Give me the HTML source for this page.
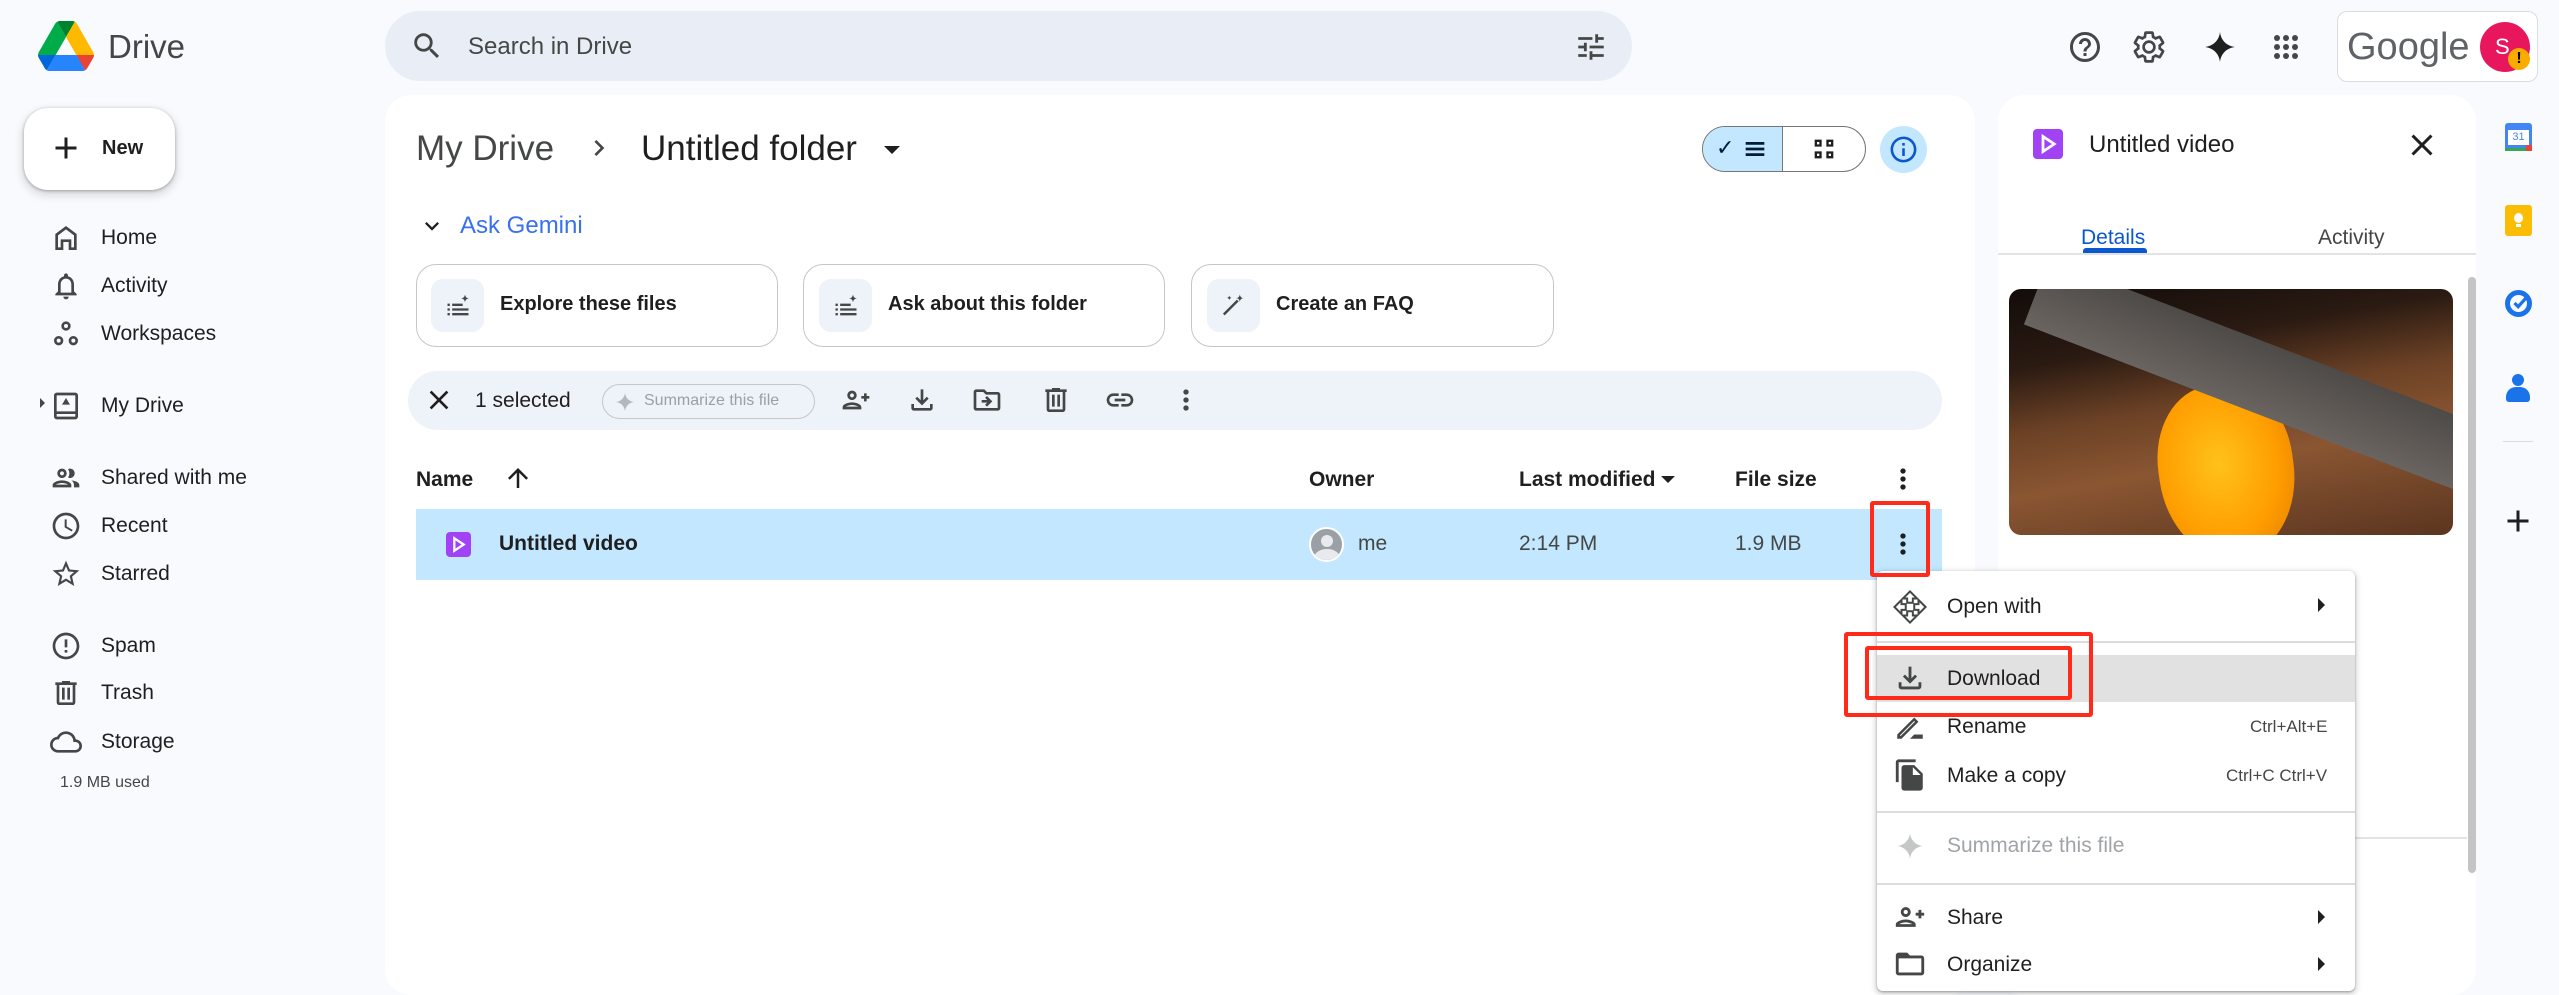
<!DOCTYPE html>
<html><head><meta charset="utf-8"><style>
*{box-sizing:border-box;margin:0;padding:0}
body{width:2559px;height:978px;overflow:hidden;background:#f8fafd;font-family:"Liberation Sans",Arial,sans-serif;color:#1f1f1f;position:relative}
.a{position:absolute}
.t{position:absolute;white-space:nowrap;line-height:1}
svg{position:absolute;fill:#444746}
.nav{font-size:21px}
.ic{width:32px;height:32px}
</style></head><body>
<!-- logo -->
<svg class="a" style="left:38px;top:21px" width="56" height="50" viewBox="0 0 87.3 78"><path d="m6.6 66.85 3.850 6.65c.8 1.4 1.95 2.5 3.3 3.3l13.75-23.8h-27.5c0 1.55.4 3.1 1.2 4.5z" fill="#0066da"/><path d="m43.65 25-13.75-23.8c-1.35.8-2.5 1.9-3.3 3.3l-25.4 44a9.06 9.06 0 0 0 -1.2 4.5h27.5z" fill="#00ac47"/><path d="m73.55 76.8c1.35-.8 2.5-1.9 3.3-3.3l1.6-2.75 7.650-13.25c.8-1.4 1.2-2.95 1.2-4.5h-27.502l5.852 11.5z" fill="#ea4335"/><path d="m43.65 25 13.75-23.8c-1.35-.8-2.9-1.2-4.5-1.2h-18.5c-1.6 0-3.15.45-4.5 1.2z" fill="#00832d"/><path d="m59.8 53h-32.3l-13.75 23.8c1.35.8 2.9 1.2 4.5 1.2h50.8c1.6 0 3.15-.45 4.5-1.2z" fill="#2684fc"/><path d="m73.4 26.5-12.7-22c-.8-1.4-1.950-2.5-3.3-3.3l-13.750 23.8 16.15 28h27.45c0-1.55-.4-3.1-1.2-4.5z" fill="#ffba00"/></svg>
<div class="t" style="left:108px;top:30px;font-size:33px;color:#444746">Drive</div>
<!-- search -->
<div class="a" style="left:385px;top:11px;width:1247px;height:70px;border-radius:35px;background:#e9eef6"></div>
<svg style="left:410px;top:29px" width="34" height="34" viewBox="0 0 24 24"><path d="M15.5 14h-.79l-.28-.27A6.47 6.47 0 0 0 16 9.5 6.5 6.5 0 1 0 9.5 16c1.61 0 3.090-.59 4.230-1.57l.27.28v.79l5 4.99L20.49 19l-4.99-5zm-6 0C7.01 14 5 11.99 5 9.5S7.01 5 9.5 5 14 7.01 14 9.5 11.99 14 9.5 14z"/></svg>
<div class="t" style="left:468px;top:35px;font-size:24px;color:#444746">Search in Drive</div>
<svg style="left:1574px;top:30px" width="34" height="34" viewBox="0 0 24 24"><path d="M3 17v2h6v-2H3zM3 5v2h10V5H3zm10 16v-2h8v-2h-8v-2h-2v6h2zM7 9v2H3v2h4v2h2V9H7zm14 4v-2H11v2h10zm-6-4h2V7h4V5h-4V3h-2v6z"/></svg>
<!-- top right -->
<svg style="left:2067px;top:29px" width="36" height="36" viewBox="0 0 24 24"><path d="M11 18h2v-2h-2v2zm1-16C6.48 2 2 6.48 2 12s4.48 10 10 10 10-4.48 10-10S17.52 2 12 2zm0 18c-4.41 0-8-3.59-8-8s3.59-8 8-8 8 3.59 8 8-3.59 8-8 8zm0-14c-2.21 0-4 1.79-4 4h2c0-1.1.9-2 2-2s2 .9 2 2c0 2-3 1.75-3 5h2c0-2.25 3-2.5 3-5 0-2.21-1.79-4-4-4z"/></svg>
<svg style="left:2131px;top:29px" width="36" height="36" viewBox="0 0 24 24"><path d="M19.14 12.94c.04-.3.06-.61.06-.94 0-.32-.02-.64-.07-.94l2.030-1.58a.49.49 0 0 0 .12-.61l-1.92-3.32a.488.488 0 0 0-.59-.22l-2.39.96c-.5-.38-1.03-.7-1.62-.94l-.36-2.54a.484.484 0 0 0-.48-.41h-3.84c-.24 0-.43.17-.47.41l-.36 2.54c-.59.24-1.13.57-1.62.94l-2.39-.96c-.22-.08-.47 0-.59.22L2.74 8.87c-.12.21-.08.47.12.61l2.03 1.58c-.05.3-.09.63-.09.94s.02.64.07.94l-2.03 1.58a.49.49 0 0 0-.12.61l1.92 3.32c.12.22.37.29.59.22l2.39-.96c.5.38 1.03.7 1.62.94l.36 2.54c.05.24.24.41.48.41h3.84c.24 0 .44-.17.47-.41l.36-2.54c.59-.24 1.13-.56 1.62-.94l2.39.96c.22.08.47 0 .59-.22l1.92-3.32c.12-.22.07-.47-.12-.61l-2.01-1.58zM12 15.6c-1.98 0-3.6-1.62-3.6-3.6s1.62-3.6 3.6-3.6 3.6 1.62 3.6 3.6-1.62 3.6-3.6 3.6z" fill="none" stroke="#444746" stroke-width="1.8"/></svg>
<svg style="left:2202px;top:29px" width="36" height="36" viewBox="0 0 24 24"><path d="M12 2C12.6 7.5 16.5 11.4 22 12 16.5 12.6 12.6 16.5 12 22 11.4 16.5 7.5 12.6 2 12 7.5 11.4 11.4 7.5 12 2z" fill="#1f1f1f"/></svg>
<svg style="left:2268px;top:29px" width="36" height="36" viewBox="0 0 24 24"><g fill="#444746"><circle cx="6" cy="6" r="2"/><circle cx="12" cy="6" r="2"/><circle cx="18" cy="6" r="2"/><circle cx="6" cy="12" r="2"/><circle cx="12" cy="12" r="2"/><circle cx="18" cy="12" r="2"/><circle cx="6" cy="18" r="2"/><circle cx="12" cy="18" r="2"/><circle cx="18" cy="18" r="2"/></g></svg>
<div class="a" style="left:2337px;top:11px;width:201px;height:71px;border:1px solid #dadce0;border-radius:10px;background:#fff"></div>
<div class="t" style="left:2347px;top:28px;font-size:38px;color:#5f6368">Google</div>
<div class="a" style="left:2480px;top:22px;width:50px;height:50px;border-radius:50%;background:#e8175d"></div>
<div class="t" style="left:2495px;top:36px;font-size:22px;color:#fff">S</div>
<div class="a" style="left:2508px;top:48px;width:22px;height:22px;border-radius:50%;background:#f9ab00;color:#000;font-size:16px;font-weight:bold;text-align:center;line-height:22px">!</div>
<!-- New -->
<div class="a" style="left:24px;top:108px;width:151px;height:82px;border-radius:24px;background:#fff;box-shadow:0 1px 3px rgba(0,0,0,.3),0 4px 8px 3px rgba(0,0,0,.1)"></div>
<svg style="left:48px;top:130px" width="36" height="36" viewBox="0 0 24 24"><path d="M19 13h-6v6h-2v-6H5v-2h6V5h2v6h6v2z" fill="#1f1f1f"/></svg>
<div class="t nav" style="left:102px;top:138px;font-weight:bold;font-size:20px">New</div>
<!-- nav -->
<svg class="ic" style="left:50px;top:222px" viewBox="0 0 24 24"><path d="M12 3 4 9v12h6v-6h4v6h6V9l-8-6zm6 16h-2v-6H8v6H6v-9l6-4.5 6 4.5v9z"/></svg>
<div class="t nav" style="left:101px;top:227px">Home</div>
<svg class="ic" style="left:50px;top:270px" viewBox="0 0 24 24"><path d="M12 22c1.1 0 2-.9 2-2h-4a2 2 0 0 0 2 2zm6-6v-5c0-3.07-1.64-5.64-4.5-6.32V4c0-.83-.67-1.5-1.5-1.5s-1.5.67-1.5 1.5v.68C7.63 5.36 6 7.92 6 11v5l-2 2v1h16v-1l-2-2zm-2 1H8v-6c0-2.48 1.51-4.5 4-4.5s4 2.02 4 4.5v6z"/></svg>
<div class="t nav" style="left:101px;top:275px">Activity</div>
<svg class="ic" style="left:50px;top:318px" viewBox="0 0 24 24"><g fill="none" stroke="#444746" stroke-width="2"><circle cx="12" cy="6" r="2.5"/><circle cx="6.5" cy="17" r="2.5"/><circle cx="17.5" cy="17" r="2.5"/></g></svg>
<div class="t nav" style="left:101px;top:323px">Workspaces</div>
<div class="a" style="left:40px;top:398px;width:0;height:0;border-top:5px solid transparent;border-bottom:5px solid transparent;border-left:5px solid #444746"></div>
<svg class="ic" style="left:50px;top:390px" viewBox="0 0 24 24"><path d="M19 2H5a2 2 0 0 0-2 2v16a2 2 0 0 0 2 2h14a2 2 0 0 0 2-2V4a2 2 0 0 0-2-2zm0 18H5v-2h14v2zm0-4H5V4h14v12zM12 6l-3 5h6l-3-5z"/></svg>
<div class="t nav" style="left:101px;top:395px">My Drive</div>
<svg class="ic" style="left:50px;top:462px" viewBox="0 0 24 24"><path d="M9 12c1.93 0 3.5-1.57 3.5-3.5S10.93 5 9 5 5.5 6.57 5.5 8.5 7.07 12 9 12zm0-5c.83 0 1.5.67 1.5 1.5S9.83 10 9 10s-1.5-.67-1.5-1.5S8.17 7 9 7zm0 6.75c-2.34 0-7 1.17-7 3.5V19h14v-1.75c0-2.33-4.66-3.5-7-3.5zM4.34 17c.84-.58 2.87-1.25 4.66-1.25s3.82.67 4.66 1.25H4.34zM16.04 13.81c1.16.84 1.96 1.96 1.96 3.44V19h4v-1.75c0-2.02-3.5-3.17-5.96-3.44zM15 12c1.93 0 3.5-1.57 3.5-3.5S16.93 5 15 5c-.54 0-1.04.13-1.5.35.63.89 1 1.98 1 3.15s-.37 2.26-1 3.15c.46.22.96.35 1.5.35z"/></svg>
<div class="t nav" style="left:101px;top:467px">Shared with me</div>
<svg class="ic" style="left:50px;top:510px" viewBox="0 0 24 24"><path d="M11.99 2C6.47 2 2 6.48 2 12s4.47 10 9.990 10C17.52 22 22 17.52 22 12S17.52 2 11.99 2zM12 20c-4.42 0-8-3.58-8-8s3.58-8 8-8 8 3.58 8 8-3.58 8-8 8zm.5-13H11v6l5.25 3.15.75-1.23-4.5-2.67z"/></svg>
<div class="t nav" style="left:101px;top:515px">Recent</div>
<svg class="ic" style="left:50px;top:558px" viewBox="0 0 24 24"><path d="m22 9.24-7.19-.62L12 2 9.19 8.63 2 9.24l5.46 4.73L5.82 21 12 17.27 18.18 21l-1.63-7.03L22 9.24zM12 15.4l-3.76 2.27 1-4.28-3.32-2.88 4.38-.38L12 6.1l1.71 4.04 4.38.38-3.32 2.88 1 4.28L12 15.4z"/></svg>
<div class="t nav" style="left:101px;top:563px">Starred</div>
<svg class="ic" style="left:50px;top:630px" viewBox="0 0 24 24"><path d="M11 15h2v2h-2zm0-8h2v6h-2zm.99-5C6.47 2 2 6.48 2 12s4.47 10 9.99 10C17.52 22 22 17.52 22 12S17.52 2 11.99 2zM12 20c-4.42 0-8-3.58-8-8s3.58-8 8-8 8 3.58 8 8-3.58 8-8 8z"/></svg>
<div class="t nav" style="left:101px;top:635px">Spam</div>
<svg class="ic" style="left:50px;top:677px" viewBox="0 0 24 24"><path d="M15 4V3H9v1H4v2h1v13c0 1.1.9 2 2 2h10c1.1 0 2-.9 2-2V6h1V4h-5zm2 15H7V6h10v13zM9 8h2v9H9zm4 0h2v9h-2z"/></svg>
<div class="t nav" style="left:101px;top:682px">Trash</div>
<svg class="ic" style="left:50px;top:726px" viewBox="0 0 24 24"><path d="M19.35 10.04A7.49 7.49 0 0 0 12 4C9.11 4 6.6 5.64 5.35 8.04A5.994 5.994 0 0 0 0 14c0 3.31 2.69 6 6 6h13c2.76 0 5-2.24 5-5 0-2.64-2.05-4.78-4.65-4.96zM19 18H6c-2.21 0-4-1.79-4-4s1.79-4 4-4h.71C7.37 7.69 9.48 6 12 6c3.04 0 5.5 2.46 5.5 5.5v.5H19c1.66 0 3 1.34 3 3s-1.34 3-3 3z"/></svg>
<div class="t nav" style="left:101px;top:731px">Storage</div>
<div class="t" style="left:60px;top:775px;font-size:16px;color:#444746">1.9 MB used</div>
<!-- main panel -->
<div class="a" style="left:385px;top:95px;width:1590px;height:900px;border-radius:26px;background:#fff"></div>
<div class="t" style="left:416px;top:131px;font-size:35px;color:#444746">My Drive</div>
<svg style="left:583px;top:132px" width="32" height="32" viewBox="0 0 24 24"><path d="M8.6 16.6 13.2 12 8.6 7.4 10 6l6 6-6 6z"/></svg>
<div class="t" style="left:641px;top:131px;font-size:35px;color:#1f1f1f">Untitled folder</div>
<div class="a" style="left:884px;top:146px;border-left:8px solid transparent;border-right:8px solid transparent;border-top:8px solid #1f1f1f"></div>
<!-- view toggle -->
<div class="a" style="left:1702px;top:126px;width:164px;height:46px;border:1.5px solid #747775;border-radius:23px;overflow:hidden;background:#fff"><div style="width:80px;height:100%;background:#c2e7ff;border-right:1.5px solid #747775"></div></div>
<div class="t" style="left:1716px;top:137px;font-size:22px;color:#001d35">✓</div>
<svg style="left:1741px;top:135px" width="28" height="28" viewBox="0 0 24 24"><path d="M4 6h16v2.4H4zm0 4.8h16v2.4H4zm0 4.8h16V18H4z" fill="#001d35"/></svg>
<svg style="left:1810px;top:135px" width="28" height="28" viewBox="0 0 24 24"><path d="M4 4h6v6H4zm2 2v2h2V6zm8-2h6v6h-6zm2 2v2h2V6zM4 14h6v6H4zm2 2v2h2v-2zm8-2h6v6h-6zm2 2v2h2v-2z" fill="#1f1f1f"/></svg>
<div class="a" style="left:1880px;top:126px;width:47px;height:47px;border-radius:50%;background:#c2e7ff"></div>
<svg style="left:1888px;top:134px" width="31" height="31" viewBox="0 0 24 24"><path d="M11 7h2v2h-2zm0 4h2v6h-2zm1-9C6.48 2 2 6.48 2 12s4.48 10 10 10 10-4.48 10-10S17.52 2 12 2zm0 18c-4.41 0-8-3.59-8-8s3.59-8 8-8 8 3.59 8 8-3.59 8-8 8z" fill="#0b57d0"/></svg>
<!-- gemini -->
<svg style="left:418px;top:212px" width="28" height="28" viewBox="0 0 24 24"><path d="M7.4 8.6 12 13.2l4.6-4.6L18 10l-6 6-6-6z" fill="#1f1f1f"/></svg>
<div class="t" style="left:460px;top:214px;font-size:24px;color:#3870f0">Ask Gemini</div>
<!-- cards -->
<div class="a" style="left:416px;top:264px;width:362px;height:83px;border:1.5px solid #c4c7c5;border-radius:20px"></div>
<div class="a" style="left:803px;top:264px;width:362px;height:83px;border:1.5px solid #c4c7c5;border-radius:20px"></div>
<div class="a" style="left:1191px;top:264px;width:363px;height:83px;border:1.5px solid #c4c7c5;border-radius:20px"></div>
<div class="a" style="left:431px;top:279px;width:53px;height:53px;border-radius:12px;background:#eef2f9"></div>
<div class="a" style="left:819px;top:279px;width:53px;height:53px;border-radius:12px;background:#eef2f9"></div>
<div class="a" style="left:1207px;top:279px;width:53px;height:53px;border-radius:12px;background:#eef2f9"></div>
<svg style="left:444px;top:292px" width="28" height="28" viewBox="0 0 24 24"><path d="M3 10h2v2H3zm4 0h9v2H7zM3 14h2v2H3zm4 0h14v2H7zm-4 4h2v2H3zm4 0h14v2H7zM18 2c.3 2.2 1.3 3.2 3.5 3.5-2.2.3-3.2 1.3-3.5 3.5-.3-2.2-1.3-3.2-3.5-3.5 2.2-.3 3.2-1.3 3.5-3.5z"/></svg>
<svg style="left:832px;top:292px" width="28" height="28" viewBox="0 0 24 24"><path d="M3 10h2v2H3zm4 0h9v2H7zM3 14h2v2H3zm4 0h14v2H7zm-4 4h2v2H3zm4 0h14v2H7zM18 2c.3 2.2 1.3 3.2 3.5 3.5-2.2.3-3.2 1.3-3.5 3.5-.3-2.2-1.3-3.2-3.5-3.5 2.2-.3 3.2-1.3 3.5-3.5z"/></svg>
<svg style="left:1220px;top:292px" width="28" height="28" viewBox="0 0 24 24"><path d="M4 20 16 8l-1.5-1.5L2.5 18.5zM17 2c.3 2 1.2 2.9 3 3.2-1.8.3-2.7 1.2-3 3.2-.3-2-1.2-2.9-3-3.2 1.8-.3 2.7-1.2 3-3.2zM8 3c.2 1.2.8 1.8 2 2-1.2.2-1.8.8-2 2-.2-1.2-.8-1.8-2-2 1.2-.2 1.8-.8 2-2z"/></svg>
<div class="t" style="left:500px;top:294px;font-size:20px;font-weight:bold;color:#1f1f1f">Explore these files</div>
<div class="t" style="left:888px;top:294px;font-size:20px;font-weight:bold;color:#1f1f1f">Ask about this folder</div>
<div class="t" style="left:1276px;top:294px;font-size:20px;font-weight:bold;color:#1f1f1f">Create an FAQ</div>
<!-- selection bar -->
<div class="a" style="left:408px;top:371px;width:1534px;height:59px;border-radius:30px;background:#eef2f9"></div>
<svg style="left:423px;top:384px" width="32" height="32" viewBox="0 0 24 24"><path d="M19 6.41 17.59 5 12 10.59 6.41 5 5 6.41 10.59 12 5 17.59 6.41 19 12 13.41 17.59 19 19 17.59 13.41 12z" fill="#1f1f1f"/></svg>
<div class="t" style="left:475px;top:390px;font-size:21px;color:#1f1f1f">1 selected</div>
<div class="a" style="left:602px;top:384px;width:213px;height:35px;border:1.5px solid #c4c7c5;border-radius:18px"></div>
<svg style="left:614px;top:391px" width="22" height="22" viewBox="0 0 24 24"><path d="M12 2c.6 5.5 4.5 9.4 10 10-5.5.6-9.4 4.5-10 10-.6-5.5-4.5-9.4-10-10 5.5-.6 9.4-4.5 10-10z" fill="#b5b8ba"/></svg>
<div class="t" style="left:644px;top:393px;font-size:16px;color:#9aa0a6">Summarize this file</div>
<svg style="left:840px;top:384px" width="32" height="32" viewBox="0 0 24 24"><path d="M9 12c1.93 0 3.5-1.57 3.5-3.5S10.93 5 9 5 5.5 6.57 5.5 8.5 7.07 12 9 12zm0-5c.83 0 1.5.67 1.5 1.5S9.83 10 9 10s-1.5-.67-1.5-1.5S8.17 7 9 7zm0 6.75c-2.34 0-7 1.17-7 3.5V19h14v-1.75c0-2.33-4.66-3.5-7-3.5zM4.34 17c.84-.58 2.87-1.25 4.66-1.25s3.82.67 4.66 1.25H4.34zM20 9V7h-2v2h-2v2h2v2h2v-2h2V9z"/></svg>
<svg style="left:906px;top:384px" width="32" height="32" viewBox="0 0 24 24"><path d="M18 15v3H6v-3H4v3c0 1.1.9 2 2 2h12c1.1 0 2-.9 2-2v-3h-2zm-1-4-1.41-1.41L13 12.17V4h-2v8.17L8.41 9.59 7 11l5 5 5-5z"/></svg>
<svg style="left:971px;top:384px" width="32" height="32" viewBox="0 0 24 24"><path d="M20 6h-8l-2-2H4c-1.1 0-2 .9-2 2v12c0 1.1.9 2 2 2h16c1.1 0 2-.9 2-2V8c0-1.1-.9-2-2-2zm0 12H4V6h5.17l2 2H20v10zm-7.84-6H8v2h4.16l-1.59 1.59L11.99 17 16 13.01 11.99 9l-1.41 1.41L12.16 12z"/></svg>
<svg style="left:1040px;top:384px" width="32" height="32" viewBox="0 0 24 24"><path d="M15 4V3H9v1H4v2h1v13c0 1.1.9 2 2 2h10c1.1 0 2-.9 2-2V6h1V4h-5zm2 15H7V6h10v13zM9 8h2v9H9zm4 0h2v9h-2z"/></svg>
<svg style="left:1104px;top:384px" width="32" height="32" viewBox="0 0 24 24"><path d="M17 7h-4v2h4c1.65 0 3 1.35 3 3s-1.35 3-3 3h-4v2h4c2.76 0 5-2.24 5-5s-2.24-5-5-5zm-6 8H7c-1.650 0-3-1.35-3-3s1.35-3 3-3h4V7H7c-2.76 0-5 2.24-5 5s2.24 5 5 5h4v-2zm-3-4h8v2H8z"/></svg>
<svg style="left:1170px;top:384px" width="32" height="32" viewBox="0 0 24 24"><path d="M12 8a2 2 0 1 0 0-4 2 2 0 0 0 0 4zm0 2a2 2 0 1 0 0 4 2 2 0 0 0 0-4zm0 6a2 2 0 1 0 0 4 2 2 0 0 0 0-4z"/></svg>
<!-- headers -->
<div class="t" style="left:416px;top:469px;font-size:21px;font-weight:bold;color:#1f1f1f">Name</div>
<svg style="left:503px;top:463px" width="30" height="30" viewBox="0 0 24 24"><path d="m4 12 1.41 1.41L11 7.83V20h2V7.83l5.58 5.59L20 12l-8-8-8 8z" fill="#1f1f1f"/></svg>
<div class="t" style="left:1309px;top:469px;font-size:21px;font-weight:bold;color:#1f1f1f">Owner</div>
<div class="t" style="left:1519px;top:469px;font-size:21px;font-weight:bold;color:#1f1f1f">Last modified</div>
<div class="a" style="left:1661px;top:476px;border-left:7px solid transparent;border-right:7px solid transparent;border-top:7px solid #1f1f1f"></div>
<div class="t" style="left:1735px;top:469px;font-size:21px;font-weight:bold;color:#1f1f1f">File size</div>
<svg style="left:1887px;top:463px" width="32" height="32" viewBox="0 0 24 24"><path d="M12 8a2 2 0 1 0 0-4 2 2 0 0 0 0 4zm0 2a2 2 0 1 0 0 4 2 2 0 0 0 0-4zm0 6a2 2 0 1 0 0 4 2 2 0 0 0 0-4z" fill="#1f1f1f"/></svg>
<!-- row -->
<div class="a" style="left:416px;top:509px;width:1526px;height:71px;background:#c2e7ff"></div>
<div class="a" style="left:446px;top:532px;width:25px;height:25px;border-radius:4px;background:#a142f4"></div>
<svg style="left:446px;top:532px" width="25" height="25" viewBox="0 0 24 24"><path d="M8 6v12l9-6z" fill="none" stroke="#fff" stroke-width="2.2"/></svg>
<div class="t" style="left:499px;top:533px;font-size:21px;font-weight:bold;color:#1f1f1f">Untitled video</div>
<div class="a" style="left:1309px;top:527px;width:35px;height:35px;border-radius:50%;background:#9aa0a6;border:2px solid #fff;overflow:hidden"><div style="position:absolute;left:10px;top:6px;width:12px;height:12px;border-radius:50%;background:#e8eaed"></div><div style="position:absolute;left:3px;top:20px;width:26px;height:18px;border-radius:50%;background:#e8eaed"></div></div>
<div class="t" style="left:1358px;top:533px;font-size:21px;color:#444746">me</div>
<div class="t" style="left:1519px;top:533px;font-size:21px;color:#444746">2:14 PM</div>
<div class="t" style="left:1735px;top:533px;font-size:21px;color:#444746">1.9 MB</div>
<svg style="left:1887px;top:528px" width="32" height="32" viewBox="0 0 24 24"><path d="M12 8a2 2 0 1 0 0-4 2 2 0 0 0 0 4zm0 2a2 2 0 1 0 0 4 2 2 0 0 0 0-4zm0 6a2 2 0 1 0 0 4 2 2 0 0 0 0-4z" fill="#1f1f1f"/></svg>
<!-- details panel -->
<div class="a" style="left:1998px;top:95px;width:478px;height:900px;border-radius:26px;background:#fff"></div>
<div class="a" style="left:2033px;top:129px;width:30px;height:30px;border-radius:4px;background:#a142f4"></div>
<svg style="left:2033px;top:129px" width="30" height="30" viewBox="0 0 24 24"><path d="M8 6v12l9-6z" fill="none" stroke="#fff" stroke-width="2.2"/></svg>
<div class="t" style="left:2089px;top:133px;font-size:24px;color:#1f1f1f">Untitled video</div>
<svg style="left:2404px;top:127px" width="36" height="36" viewBox="0 0 24 24"><path d="M19 6.41 17.59 5 12 10.59 6.41 5 5 6.41 10.59 12 5 17.59 6.41 19 12 13.41 17.59 19 19 17.59 13.41 12z" fill="#1f1f1f"/></svg>
<div class="t" style="left:2081px;top:227px;font-size:21px;color:#0b57d0">Details</div>
<div class="t" style="left:2318px;top:227px;font-size:21px;color:#444746">Activity</div>
<div class="a" style="left:2083px;top:248px;width:64px;height:5px;border-radius:3px 3px 0 0;background:#0b57d0"></div>
<div class="a" style="left:1998px;top:253px;width:478px;height:1.5px;background:#e3e3e3"></div>
<div class="a" style="left:2009px;top:289px;width:444px;height:246px;border-radius:12px;overflow:hidden;background:linear-gradient(170deg,#120c09 0%,#2a1a12 25%,#6b4125 45%,#8a5632 65%,#5b3520 100%)">
 <div style="position:absolute;left:150px;top:95px;width:135px;height:175px;border-radius:45% 45% 50% 50%;background:radial-gradient(ellipse at 45% 45%,#ffc21a 0%,#ff9e00 55%,#e07800 100%);transform:rotate(-8deg)"></div>
 <div style="position:absolute;left:40px;top:-30px;width:480px;height:70px;background:linear-gradient(180deg,#4e4a47,#6a6460);transform:rotate(21deg);transform-origin:0 0"></div>
</div>
<div class="a" style="left:2468px;top:277px;width:8px;height:596px;border-radius:4px;background:#c4c4c4"></div>
<div class="a" style="left:2350px;top:837px;width:117px;height:1.5px;background:#e3e3e3"></div>
<!-- right rail -->
<div class="a" style="left:2505px;top:123px;width:27px;height:28px;border-radius:3px;background:#4285f4"><div style="position:absolute;left:3px;top:7px;width:21px;height:15px;background:#fff;color:#4285f4;font-size:11px;text-align:center;line-height:15px">31</div><div style="position:absolute;left:0;bottom:0;width:27px;height:3px;background:#34a853"></div><div style="position:absolute;right:0;bottom:0;width:6px;height:6px;background:#ea4335"></div></div>
<div class="a" style="left:2505px;top:205px;width:27px;height:31px;border-radius:3px;background:#fbbc04"><div style="position:absolute;left:9px;top:8px;width:9px;height:10px;border-radius:50%;background:#fff"></div><div style="position:absolute;left:11px;top:19px;width:5px;height:3px;background:#fff"></div></div>
<div class="a" style="left:2505px;top:290px;width:27px;height:27px;border-radius:50%;border:5px solid #1a73e8"></div>
<svg style="left:2508px;top:292px" width="24" height="22" viewBox="0 0 24 24"><path d="M6 12l4 4 9-10" fill="none" stroke="#1a73e8" stroke-width="3.5"/></svg>
<div class="a" style="left:2512px;top:374px;width:12px;height:12px;border-radius:50%;background:#1a73e8"></div>
<div class="a" style="left:2506px;top:387px;width:24px;height:15px;border-radius:10px 10px 3px 3px;background:#1a73e8"></div>
<div class="a" style="left:2503px;top:441px;width:30px;height:1px;background:#dadce0"></div>
<svg style="left:2500px;top:503px" width="36" height="36" viewBox="0 0 24 24"><path d="M19 13h-6v6h-2v-6H5v-2h6V5h2v6h6v2z" fill="#1f1f1f"/></svg>
<!-- context menu -->
<div class="a" style="left:1877px;top:571px;width:478px;height:420px;border-radius:6px;background:#fff;box-shadow:0 2px 6px 2px rgba(0,0,0,.15),0 1px 2px rgba(0,0,0,.3)"></div>
<svg style="left:1893px;top:590px" width="34" height="34" viewBox="0 0 24 24"><path d="M10 9h4V6h3l-5-5-5 5h3v3zm-1 1H6V7l-5 5 5 5v-3h3v-4zm14 2-5-5v3h-3v4h3v3l5-5zm-9 3h-4v3H7l5 5 5-5h-3v-3z" fill="none" stroke="#444746" stroke-width="1.4"/></svg>
<div class="t" style="left:1947px;top:596px;font-size:21px">Open with</div>
<div class="a" style="left:2318px;top:598px;border-top:7px solid transparent;border-bottom:7px solid transparent;border-left:7px solid #1f1f1f"></div>
<div class="a" style="left:1877px;top:641px;width:478px;height:1.5px;background:#dadce0"></div>
<div class="a" style="left:1877px;top:655px;width:478px;height:47px;background:#e1e1e1"></div>
<svg style="left:1893px;top:661px" width="34" height="34" viewBox="0 0 24 24"><path d="M18 15v3H6v-3H4v3c0 1.1.9 2 2 2h12c1.1 0 2-.9 2-2v-3h-2zm-1-4-1.41-1.41L13 12.17V4h-2v8.17L8.41 9.59 7 11l5 5 5-5z"/></svg>
<div class="t" style="left:1947px;top:668px;font-size:21px">Download</div>
<svg style="left:1893px;top:709px" width="34" height="34" viewBox="0 0 24 24"><path d="M3 21v-3L15 6l3 3L6 21H3zm2-2h.5L15.5 9 15 8.5 5 18.5V19zm7 2 3-3h6v3h-9z"/></svg>
<div class="t" style="left:1947px;top:716px;font-size:21px">Rename</div>
<div class="t" style="left:2250px;top:718px;font-size:17px;color:#444746">Ctrl+Alt+E</div>
<svg style="left:1893px;top:758px" width="34" height="34" viewBox="0 0 24 24"><path d="M16 1H4c-1.1 0-2 .9-2 2v14h2V3h12V1zm-1 4 6 6v10c0 1.1-.9 2-2 2H7.99C6.89 23 6 22.1 6 21l.01-14c0-1.1.89-2 1.99-2h7zm-1 7h5.5L14 6.5V12z"/></svg>
<div class="t" style="left:1947px;top:765px;font-size:21px">Make a copy</div>
<div class="t" style="left:2226px;top:767px;font-size:17px;color:#444746">Ctrl+C Ctrl+V</div>
<div class="a" style="left:1877px;top:811px;width:478px;height:1.5px;background:#dadce0"></div>
<svg style="left:1893px;top:829px" width="34" height="34" viewBox="0 0 24 24"><path d="M12 3c.5 4.8 4.2 8.5 9 9-4.8.5-8.5 4.2-9 9-.5-4.8-4.2-8.5-9-9 4.8-.5 8.5-4.2 9-9z" fill="#c4c7c5"/></svg>
<div class="t" style="left:1947px;top:835px;font-size:21px;color:#a0a4a8">Summarize this file</div>
<div class="a" style="left:1877px;top:883px;width:478px;height:1.5px;background:#dadce0"></div>
<svg style="left:1893px;top:900px" width="34" height="34" viewBox="0 0 24 24"><path d="M9 12c1.93 0 3.5-1.57 3.5-3.5S10.93 5 9 5 5.5 6.57 5.5 8.5 7.07 12 9 12zm0-5c.83 0 1.5.67 1.5 1.5S9.83 10 9 10s-1.5-.67-1.5-1.5S8.17 7 9 7zm0 6.75c-2.34 0-7 1.17-7 3.5V19h14v-1.75c0-2.33-4.66-3.5-7-3.5zM4.34 17c.84-.58 2.87-1.25 4.66-1.25s3.82.67 4.66 1.25H4.34zM20 9V7h-2v2h-2v2h2v2h2v-2h2V9z"/></svg>
<div class="t" style="left:1947px;top:907px;font-size:21px">Share</div>
<div class="a" style="left:2318px;top:910px;border-top:7px solid transparent;border-bottom:7px solid transparent;border-left:7px solid #1f1f1f"></div>
<svg style="left:1893px;top:947px" width="34" height="34" viewBox="0 0 24 24"><path d="M20 6h-8l-2-2H4c-1.1 0-2 .9-2 2v12c0 1.1.9 2 2 2h16c1.1 0 2-.9 2-2V8c0-1.1-.9-2-2-2zm0 12H4V8h16v10z"/></svg>
<div class="t" style="left:1947px;top:954px;font-size:21px">Organize</div>
<div class="a" style="left:2318px;top:957px;border-top:7px solid transparent;border-bottom:7px solid transparent;border-left:7px solid #1f1f1f"></div>
<!-- red annotation boxes -->
<div class="a" style="left:1870px;top:501px;width:60px;height:76px;border:4px solid #ff2a1a;border-radius:3px"></div>
<div class="a" style="left:1844px;top:632px;width:249px;height:85px;border:4px solid #ff2a1a;border-radius:3px"></div>
<div class="a" style="left:1865px;top:646px;width:207px;height:54px;border:4px solid #ff2a1a;border-radius:3px"></div>
</body></html>
